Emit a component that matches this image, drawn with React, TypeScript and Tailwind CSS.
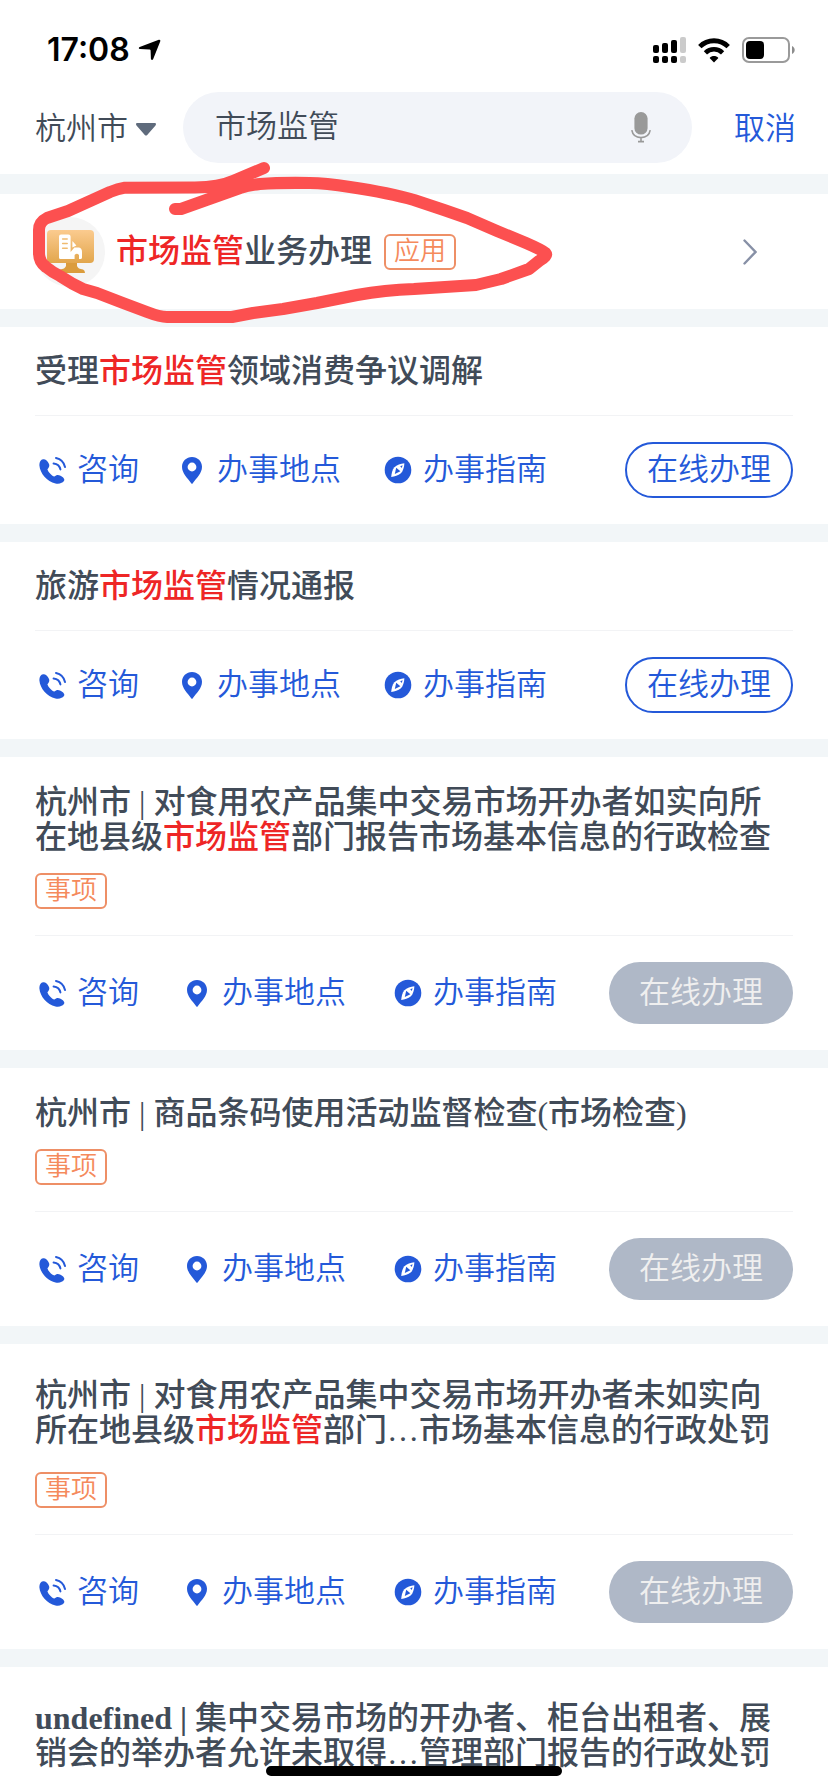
import { useState } from "react";

type Item = {
  city?: string;
  title: string[];
  tag?: boolean;
  online?: boolean;
  clamp?: boolean;
};

const KEYWORD = "市场监管";

const items: Item[] = [
  { title: ["受理", KEYWORD, "领域消费争议调解"], online: true },
  { title: ["旅游", KEYWORD, "情况通报"], online: true },
  {
    city: "杭州市",
    title: [
      "对食用农产品集中交易市场开办者如实向所在地县级",
      KEYWORD,
      "部门报告市场基本信息的行政检查",
    ],
    tag: true,
  },
  { city: "杭州市", title: ["商品条码使用活动监督检查(市场检查)"], tag: true },
  {
    city: "杭州市",
    title: [
      "对食用农产品集中交易市场开办者未如实向所在地县级",
      KEYWORD,
      "部门…市场基本信息的行政处罚",
    ],
    tag: true,
    clamp: true,
  },
];

const PhoneIcon = () => (
  <svg className="w-7 h-7 shrink-0" viewBox="0 0 28 28" fill="none">
    <path
      d="M5 3.2C7.2 2.8 9.6 4.6 11 8C11.9 10.4 10.6 12 9.4 13.2C10.2 16 13.4 19.6 16.4 20.6C18 19 20 18.4 22 19.5C25 21 26.9 22.9 26.2 24.5C24.8 27.2 21 28.1 17.5 27.4C9 25.6 2 17.2 1.4 9.4C1.2 6 2.8 3.6 5 3.2Z"
      fill="#2459d9"
    />
    <path
      d="M18 2C22.6 3 26 6.6 27 11M15.6 7.4C19 7.8 21.8 10.2 22.4 13.4"
      stroke="#2459d9"
      strokeWidth="2"
      strokeLinecap="round"
    />
  </svg>
);

const PinIcon = () => (
  <svg className="w-7 h-7 shrink-0" viewBox="0 0 28 28">
    <path
      fillRule="evenodd"
      d="M14 1C19.6 1 24 5.3 24 10.8C24 17.4 18.6 22 14.8 27.2Q14 28.2 13.2 27.2C9.4 22 4 17.4 4 10.8C4 5.3 8.4 1 14 1ZM14 6.6A4.4 4.4 0 1 0 14 15.4A4.4 4.4 0 1 0 14 6.6Z"
      fill="#2459d9"
    />
  </svg>
);

const CompassIcon = () => (
  <svg className="w-7 h-7 shrink-0" viewBox="0 0 28 28">
    <circle cx="14" cy="14" r="13.3" fill="#2459d9" />
    <path
      d="M20.4 7.2C20.2 11 19 15.4 16.6 17.6C14.4 19.4 10.6 20.6 7.2 21C7.4 17.6 8.4 13.6 10.4 11.2C12.6 8.8 16.8 7.6 20.4 7.2Z"
      fill="#fff"
    />
    <path d="M12.2 11.8L16.4 15.2L10.8 18Z" fill="#2459d9" />
    <path d="M16.2 10.2L18.6 9.2L17.8 12Z" fill="#2459d9" />
  </svg>
);

const StatusBar = () => (
  <div className="flex items-center justify-between h-[92px] pt-2 pl-[47px] pr-8">
    <div className="flex items-center gap-2 text-black">
      <span className="font-[Inter,sans-serif] text-[32px] leading-[32px] font-semibold">17:08</span>
      <svg className="w-[23px] h-[22px]" viewBox="0 0 23 22">
        <path
          d="M20.8 .8C22 .4 22.7 1.2 22.2 2.4L15.2 20C14.7 21.3 13 21.2 12.9 19.8L12.6 11.4Q12.5 10.5 11.6 10.4L2 10C.5 9.9 .4 8.4 1.7 7.9Z"
          fill="#000"
        />
      </svg>
    </div>
    <div className="flex items-center gap-3">
      <svg className="w-[33px] h-[27px]" viewBox="0 0 33 27">
        <rect x="0" y="8" width="6" height="8" rx="2" />
        <rect x="9" y="6" width="6" height="10" rx="2" />
        <rect x="18" y="3" width="6" height="13" rx="2" />
        <rect x="27" y="0" width="6" height="16" rx="2" fill="#cbcbcb" />
        <rect x="0" y="19" width="6" height="7" rx="2" />
        <rect x="9" y="19" width="6" height="7" rx="2" />
        <rect x="18" y="19" width="6" height="7" rx="2" />
        <rect x="27" y="19" width="6" height="7" rx="2" fill="#cbcbcb" />
      </svg>
      <svg className="w-8 h-[25px]" viewBox="0 0 32 25" fill="none" stroke="#000">
        <path d="M1.8 8.6C9.6 .8 22.4 .8 30.2 8.6" strokeWidth="4.8" />
        <path d="M7.4 14.8C12.2 10.1 19.8 10.1 24.6 14.8" strokeWidth="4.6" />
        <path d="M16 24.4L11.6 20C14 17.4 18 17.4 20.4 20Z" fill="#000" stroke="none" />
      </svg>
      <svg className="w-[54px] h-[26px]" viewBox="0 0 54 26">
        <rect x="1" y="1" width="46" height="24" rx="6" fill="none" stroke="#9a9a9a" strokeWidth="2" />
        <rect x="4" y="4" width="18" height="18" rx="4" fill="#000" />
        <path d="M50 9C53.6 10.4 53.6 15.6 50 17Z" fill="#8c8c8c" />
      </svg>
    </div>
  </div>
);

const SearchBar = () => {
  const [keyword, setKeyword] = useState(KEYWORD);
  return (
    <div className="flex items-center pl-[35px] pr-8 pb-[11px] text-[31px] font-[350]">
      <label className="flex items-center gap-2 pt-[3px] text-[#414b58]">
        <select aria-label="城市" className="appearance-none bg-transparent outline-none">
          <option>杭州市</option>
        </select>
        <svg className="w-5 h-[13px] pointer-events-none" viewBox="0 0 20 13">
          <path d="M1.4 0H18.6C20 0 20.4 1.4 19.5 2.4L11.2 12Q10 13.2 8.8 12L.5 2.4C-.4 1.4 0 0 1.4 0Z" fill="#5f6b7c" />
        </svg>
      </label>
      <div className="flex items-center flex-1 min-w-0 h-[71px] ml-[27px] pl-8 pr-[41px] rounded-full bg-[#f2f4f9]">
        <input
          type="text"
          aria-label="搜索"
          value={keyword}
          onChange={(e) => setKeyword(e.target.value)}
          className="flex-1 min-w-0 bg-transparent outline-none text-[#414b58]"
        />
        <button aria-label="语音输入">
          <svg className="w-5 h-[31px]" viewBox="0 0 20 31">
            <rect x="3.4" y="0" width="13.2" height="22.6" rx="6.6" fill="#999" />
            <path
              d="M.8 18.2C1.6 22.8 5.2 25.6 10 25.6S18.4 22.8 19.2 18.2M10 25.6V29.4M7 29.6H13"
              fill="none"
              stroke="#999"
              strokeWidth="1.6"
            />
          </svg>
        </button>
      </div>
      <button className="ml-[42px] pt-[3px] text-[#2459d9]">取消</button>
    </div>
  );
};

const AppIcon = () => (
  <svg className="w-[70px] h-[70px] shrink-0" viewBox="0 0 70 70">
    <defs>
      <linearGradient id="screen" x1="0" y1="0" x2="0" y2="1">
        <stop offset="0" stopColor="#fbcb8f" />
        <stop offset="1" stopColor="#e2a64c" />
      </linearGradient>
    </defs>
    <circle cx="35" cy="35" r="35" fill="#f5f5f5" />
    <path d="M31 46H42V49Q43 52 48 52.5Q50 53 50 56H22Q22 53 25 52.5Q30 52 31 49Z" fill="#db9c3c" />
    <rect x="12" y="13" width="47" height="33" rx="4" fill="url(#screen)" />
    <path
      d="M26 17.4H33.4Q35.6 17.4 35.6 19.6V35L39.4 30.6H44Q47 31.4 47 35V40.4Q47 42 45.400 42H44V38Q42 35.400 39.600 38V42H25Q24 42 24 40.600V19.600Q24 17.400 26 17.400Z"
      fill="#fff"
    />
    <path d="M37.4 24L41.400 28.600L37.400 30.600Z" fill="#fff" />
    <path d="M27.6 22H32.2M27.6 26.600H32.200M27.600 31.200H32.200" stroke="#f0bb70" strokeWidth="1.5" strokeLinecap="round" />
  </svg>
);

const Tag = ({ text }: { text: string }) => (
  <span className="inline-flex items-center justify-center w-[72px] h-9 border-2 border-[#ee8f66] rounded-md text-[#f58a5c] text-[26px] leading-[32px] font-[350]">
    {text}
  </span>
);

const Title = ({ parts }: { parts: string[] }) => (
  <>
    {parts.map((part, i) => (
      <span key={i} className={part === KEYWORD ? "text-[#ee2626]" : ""}>
        {part}
      </span>
    ))}
  </>
);

const Actions = ({ online }: { online?: boolean }) => (
  <div className="flex items-center justify-between py-[26px] pl-[3px] text-[31px] font-[350]">
    <div className={`flex items-center text-[#2459d9] ${online ? "gap-[39px]" : "gap-[44px]"}`}>
      <a href="#" className="flex items-center gap-[11px]">
        <PhoneIcon />
        咨询
      </a>
      <a href="#" className="flex items-center gap-[11px] mr-1">
        <PinIcon />
        办事地点
      </a>
      <a href="#" className="flex items-center gap-[11px]">
        <CompassIcon />
        办事指南
      </a>
    </div>
    {online ? (
      <button className="h-14 px-5 border-2 border-[#2459d9] rounded-full text-[#2459d9] leading-[52px]">
        在线办理
      </button>
    ) : (
      <button disabled className="h-[62px] px-[30px] rounded-full bg-[#afb8c7] text-[#efefef] leading-[62px]">
        在线办理
      </button>
    )}
  </div>
);

const Card = ({ item }: { item: Item }) => (
  <section className={`bg-white px-[35px] ${item.tag ? "pt-7" : "pt-[27px]"}`}>
    <h2 className={`text-[32px] leading-[35px] font-medium ${item.clamp ? "py-[6px]" : ""}`}>
      {item.city && `${item.city} | `}
      <Title parts={item.title} />
    </h2>
    <div className={`border-b border-[#f2f3f5] ${item.tag ? "pt-[18px] pb-[26px]" : "pt-[26px]"}`}>
      {item.tag && (
        <div className="flex">
          <Tag text="事项" />
        </div>
      )}
    </div>
    <Actions online={item.online} />
  </section>
);

// hand-drawn marker around the first result
const Marker = () => (
  <svg
    className="absolute top-0 left-0 w-[828px] h-[340px] pointer-events-none"
    viewBox="0 0 828 340"
    fill="none"
    stroke="#fc5050"
    strokeWidth="12"
    strokeLinecap="round"
    strokeLinejoin="round"
  >
    <path d="M264 168L233 181Q220 187 195 187.500L125 187.700Q118 189 110 192L68 211L47 218Q39 222 39 230V253Q39 262 46 267Q52 272 60 276Q72 284 83 289L97 293L123 303L147 312Q160 317 167 317H232L253 313L283 309L317 303L357 295Q385 290 414 289L476 285L501 279L529 269L539 261Q548 256 545.500 253Q542 250 526 243L497 231L467 218L444 210L414 200Q390 193 350 187Q325 183 310 183Q280 182.500 260 184Q250 185 240 188L181 209H175" />
  </svg>
);

const App = () => {
  return (
    <div className="relative flex flex-col h-screen overflow-hidden bg-[#f2f6f8] text-[#414b58] font-['Liberation_Serif','Noto_Sans_CJK_SC',sans-serif]">
      <header className="bg-white">
        <StatusBar />
        <SearchBar />
      </header>
      <main className="flex flex-col flex-1 gap-[18px] pt-5">
        <a href="#" className="flex items-center h-[115px] pl-[35px] pr-[71px] bg-white">
          <AppIcon />
          <h2 className="ml-[11px] mr-3 text-[32px] leading-[35px] font-medium">
            <Title parts={[KEYWORD, "业务办理"]} />
          </h2>
          <Tag text="应用" />
          <svg className="w-[14px] h-[26px] ml-auto" viewBox="0 0 14 26" fill="none" stroke="#8790a6" strokeWidth="2.4">
            <path d="M1.500 1.500L12.500 13L1.500 24.500" strokeLinecap="round" />
          </svg>
        </a>
        {items.map((item, i) => (
          <Card key={i} item={item} />
        ))}
        <section className="flex-1 bg-white px-[35px] pt-7">
          <h2 className="py-[6px] text-[32px] leading-[35px] font-medium">
            <span className="font-bold">undefined | </span>
            集中交易市场的开办者、柜台出租者、展销会的举办者允许未取得…管理部门报告的行政处罚
          </h2>
        </section>
      </main>
      <Marker />
      <div className="fixed bottom-4 left-1/2 w-[296px] h-[10px] -translate-x-1/2 rounded-full bg-black" />
    </div>
  );
};

export default App;
